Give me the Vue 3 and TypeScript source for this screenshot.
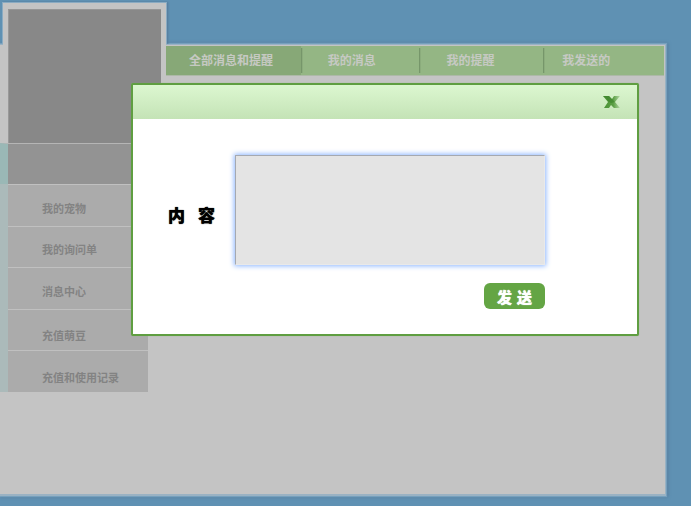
<script setup lang="ts">
import { ref } from 'vue'

interface MenuItem {
  label: string
  low?: boolean
}

const tabs: string[] = ['全部消息和提醒', '我的消息', '我的提醒', '我发送的']
const menu: MenuItem[] = [
  { label: '我的宠物' },
  { label: '我的询问单' },
  { label: '消息中心' },
  { label: '充值萌豆', low: true },
  { label: '充值和使用记录', low: true },
]

const active = ref(0)
const open = ref(true)
const content = ref('')
</script>

<template>
  <div class="page">
    <div class="panel">
      <aside class="side">
        <div class="avatar-frame"><div class="avatar"></div></div>
        <div class="name"></div>
        <nav class="menu">
          <a v-for="item in menu" :key="item.label" href="#" :class="{ low: item.low }">{{ item.label }}</a>
        </nav>
      </aside>
      <main class="main">
        <nav class="tabs">
          <button
            v-for="(tab, i) in tabs"
            :key="tab"
            type="button"
            :class="{ active: active === i }"
            @click="active = i"
          >{{ tab }}</button>
        </nav>
      </main>
    </div>

    <div v-if="open" class="overlay">
      <form class="dialog" role="dialog" @submit.prevent="open = false">
        <header class="dialog-head">
          <button class="close" type="button" @click="open = false">
            <svg viewBox="0 0 18 12" width="18" height="12">
              <defs>
                <linearGradient id="cross" x1="0" y1="0" x2="1" y2="0">
                  <stop offset="0" stop-color="#4a9236" />
                  <stop offset="0.6" stop-color="#5a9f43" />
                  <stop offset="1" stop-color="#b4d8a4" />
                </linearGradient>
              </defs>
              <path d="M0 0H6L9 3L11 0H17L12 6L17 12H11L8 9L6 12H1L5 6Z" fill="url(#cross)" />
              <path d="M0 0H6L9 3L12 6L8 7L5 5L3 2Z" fill="#357d25" opacity="0.5" />
            </svg>
          </button>
        </header>
        <div class="dialog-body">
          <label for="content"><span>内</span> <span>容</span></label>
          <textarea id="content" v-model="content"></textarea>
          <button class="send" type="submit"><span>发</span> <span>送</span></button>
        </div>
      </form>
    </div>
  </div>
</template>

<style>
body {
  background: #5f91b3;
}
</style>

<style scoped>
.page {
  position: relative;
  box-sizing: border-box;
  min-height: 100vh;
  padding: 44px 25px 10px 0;
  display: flex;
  background: #5f91b3;
  font-family: "Liberation Sans", "Noto Sans CJK SC", sans-serif;
}
button {
  border: 0;
  padding: 0;
  background: none;
  font-family: inherit;
  cursor: pointer;
}
.panel {
  flex: 1;
  display: grid;
  grid-template-columns: 166px 1fr;
  background: #c4c4c4;
  border: solid #9ab2c3;
  border-width: 1px 1px 2px 0;
  box-shadow: 0 0 1px 1px #76a0bd, 1px 0 3px 1px #54799a;
}
.side {
  margin-top: -42px;
}
.avatar-frame {
  position: relative;
  height: 134px;
  margin-left: 3px;
  padding: 6px 5px 0;
  background: #c4c4c4;
}
.avatar-frame::before {
  content: "";
  position: absolute;
  inset: 0 0 99px;
  box-shadow: 0 0 0 1px #8aabc2, 1px 0 2px 1px #54799a;
  clip-path: inset(-2px -4px 0 -1px);
}
.avatar {
  position: relative;
  height: 134px;
  background: #888;
  box-shadow: inset 0 1px #969696, inset 1px 0 #999;
}
.name {
  width: 140px;
  height: 40px;
  border-left: 8px solid #9ab8b6;
  border-top: 1px solid #b5b5b5;
  background: #939393;
}
.menu {
  display: grid;
  grid-auto-rows: 1fr;
  width: 148px;
  height: 208px;
}
.menu a {
  display: flex;
  align-items: center;
  padding: 6px 0 0 34px;
  border-left: 8px solid #abbaba;
  box-shadow: inset 0 1px #c0c0c0;
  background: #ababab;
  color: #838383;
  font-size: 11px;
  font-weight: 700;
  text-decoration: none;
}
.menu a.low {
  padding-top: 11px;
}
.tabs {
  display: grid;
  grid-template-columns: 135fr 119fr 124fr 121fr;
  margin: 1px 1px 0 0;
  background: #94b684;
  border-bottom: 1px solid #adb9a7;
}
.tabs button {
  position: relative;
  height: 29px;
  padding: 0 0 2px 27px;
  color: #c6c9c3;
  font-size: 12px;
  font-weight: 700;
  text-align: left;
}
.tabs button:first-child {
  padding-left: 23px;
}
.tabs button:last-child {
  padding-left: 19px;
}
.tabs button.active {
  background: #87a877;
}
.tabs button + button::before {
  content: "";
  position: absolute;
  left: 0;
  top: 2px;
  bottom: 2px;
  width: 1px;
  background: #76966a;
  box-shadow: 1px 0 #8bac7c;
}
.overlay {
  position: absolute;
  inset: 83px 52px auto 131px;
}
.dialog {
  border: 2px solid #5f9e41;
  border-radius: 2px;
  background: #fff;
  box-shadow: 0 0 1px #86b271;
}
.dialog-head {
  display: flex;
  align-items: center;
  justify-content: flex-end;
  height: 34px;
  padding-right: 16px;
  background: linear-gradient(#dcf7d0, #c4e3b6);
}
.close {
  display: flex;
}
.dialog-body {
  display: grid;
  grid-template-columns: 67px 1fr;
  align-items: center;
  justify-items: end;
  row-gap: 18px;
  padding: 36px 92px 25px 35px;
}
label {
  display: flex;
  justify-self: start;
  gap: 13px;
  padding-top: 8px;
  font-size: 17px;
  font-weight: 900;
  color: #000;
  text-shadow: 0 0 1px #000;
}
textarea {
  box-sizing: border-box;
  width: 100%;
  height: 110px;
  display: block;
  border: 1px solid;
  border-color: #a5a9b0 #e9e9e9 #e9e9e9 #a5a9b0;
  outline: 0;
  resize: none;
  background: #e4e4e4;
  box-shadow: 0 0 5px 1px #8db7ff;
}
.send {
  grid-column: 2;
  display: flex;
  align-items: center;
  justify-content: center;
  gap: 5px;
  width: 61px;
  height: 26px;
  border-radius: 6px;
  background: #64a544;
  color: #fff;
  font-size: 15px;
  font-weight: 900;
  text-shadow: 0 0 1px #fff;
}
</style>
